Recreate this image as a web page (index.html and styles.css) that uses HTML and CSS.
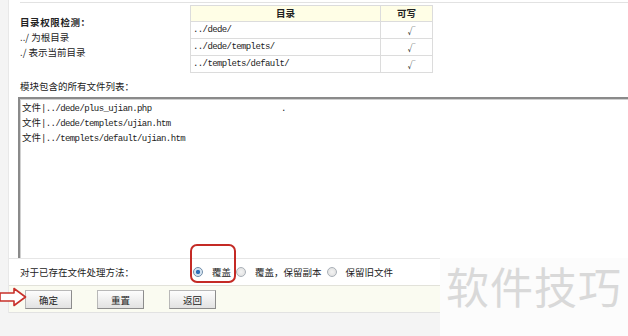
FILE: index.html
```html
<!DOCTYPE html>
<html lang="zh-CN">
<head>
    <meta charset="UTF-8">
    <title>模块安装</title>
    <link rel="stylesheet" href="styles.css">
</head>
<body>
    <div class="page">
        <div class="topline"></div>
        <div class="check">
            <div class="check-note">
                <div class="note-title">目录权限检测：</div>
                <div>../ 为根目录</div>
                <div>./ 表示当前目录</div>
            </div>
            <table class="dir-table">
                <tr>
                    <th class="col-dir">目录</th>
                    <th class="col-write">可写</th>
                </tr>
                <tr>
                    <td class="path">../dede/</td>
                    <td class="ok">√</td>
                </tr>
                <tr>
                    <td class="path">../dede/templets/</td>
                    <td class="ok">√</td>
                </tr>
                <tr>
                    <td class="path">../templets/default/</td>
                    <td class="ok">√</td>
                </tr>
            </table>
        </div>
        <div class="list-title">模块包含的所有文件列表：</div>
        <div class="file-list">
            <div class="file-line"><span class="cn">文件</span>|../dede/plus_ujian.php                           .</div>
            <div class="file-line"><span class="cn">文件</span>|../dede/templets/ujian.htm</div>
            <div class="file-line"><span class="cn">文件</span>|../templets/default/ujian.htm</div>
        </div>
        <div class="options">
            <div class="options-label">对于已存在文件处理方法：</div>
            <label class="opt"><input type="radio" name="mode" checked> 覆盖</label>
            <label class="opt"><input type="radio" name="mode"> 覆盖，保留副本</label>
            <label class="opt"><input type="radio" name="mode"> 保留旧文件</label>
        </div>
        <div class="actions">
            <button class="btn">确定</button>
            <button class="btn">重置</button>
            <button class="btn">返回</button>
        </div>
    </div>

    <div class="mark-box"></div>
    <svg class="mark-arrow" width="27" height="20" viewBox="0 0 27 20">
        <polygon points="0,6 14,6 14,1.5 25.5,10 14,18.5 14,14 0,14" fill="#fff" stroke="#c8302a" stroke-width="1.6" stroke-linejoin="round"/>
    </svg>
    <div class="watermark">软件技巧</div>
</body>
</html>
```

FILE: styles.css
```css
*{
    padding:0;
    margin:0;
    box-sizing:border-box;
}
body{
    background:#f4f4f4;
    font-family:"Noto Sans CJK SC", sans-serif;
    font-size:9.5px;
    color:#222;
    overflow:hidden;
}
.page{
    margin-left:8px;
    border-left:1px solid #e8e8e8;
    background:#fff;
    padding-top:2px;
    overflow:hidden;
}
.topline{
    margin-left:11px;
    border-top:1px solid #e2e2e2;
}
.check{
    display:flex;
    margin-top:2px;
    padding-left:11px;
}
.check-note{
    width:170px;
    padding-top:10px;
    line-height:15px;
}
.note-title{
    font-weight:bold;
    letter-spacing:0.6px;
}
.dir-table{
    border-collapse:collapse;
    width:243px;
}
.dir-table th,
.dir-table td{
    border:1px solid #dcdcdc;
    height:17px;
    line-height:15px;
}
.dir-table th{
    background:#fffee6;
    height:16px;
    font-weight:bold;
    text-align:center;
}
.col-dir{
    width:190px;
}
.path{
    padding-left:2px;
    font-family:"Liberation Mono", "Noto Sans CJK SC", monospace;
    font-size:9px;
    letter-spacing:-0.6px;
}
.ok{
    text-align:center;
    padding-left:10px;
    font-size:8px;
}
.list-title{
    padding-left:11px;
    margin-top:6px;
    line-height:15px;
}
.file-list{
    margin:3px -30px 0 9px;
    height:161px;
    border-top:2px solid #8a8a8a;
    border-left:2px solid #8a8a8a;
    box-shadow:inset 1px 1px 0 #d0d0d0;
    padding:3px 0 0 2px;
    font-family:"Liberation Mono", "Noto Sans CJK SC", monospace;
    font-size:9px;
    letter-spacing:-0.6px;
    line-height:15px;
}
.file-line{
    white-space:pre;
    height:15px;
}
.file-line .cn{
    font-family:"Noto Sans CJK SC", sans-serif;
    font-size:9.5px;
    letter-spacing:0;
    line-height:1;
}
.options{
    display:flex;
    align-items:center;
    height:27px;
    padding-left:11px;
    border-top:1px solid #e6e6e6;
}
.options-label{
    width:173px;
}
.opt{
    display:flex;
    align-items:center;
    margin-right:5px;
}
.opt input{
    appearance:none;
    -webkit-appearance:none;
    width:10px;
    height:10px;
    border-radius:50%;
    border:1px solid #a9b0b8;
    background:radial-gradient(circle, #f4f4f4 0, #dcdcdc 100%);
    margin-right:9px;
}
.opt input:checked{
    border-color:#6f8ca8;
    background:radial-gradient(circle, #2f6fb8 0, #2f6fb8 30%, #cfe0f0 45%, #f0f4f8 100%);
}
.actions{
    display:flex;
    gap:25px;
    height:28px;
    padding:4px 0 0 16px;
    background:#fafbf1;
    border-top:1px solid #e2e2da;
    border-bottom:1px solid #e2e2e2;
}
.btn{
    width:47px;
    height:19px;
    border:1px solid #b8b8b8;
    border-right-color:#8c8c8c;
    border-bottom-color:#8c8c8c;
    background:linear-gradient(#fdfdfd, #e2e2e2);
    font-family:"Noto Sans CJK SC", sans-serif;
    font-size:9.5px;
    color:#222;
}
.mark-box{
    position:absolute;
    left:190px;
    top:244px;
    width:46px;
    height:39px;
    border:2px solid #c42a25;
    border-radius:7px;
}
.mark-arrow{
    position:absolute;
    left:0;
    top:287px;
}
.watermark{
    position:absolute;
    left:440px;
    top:258px;
    width:188px;
    height:78px;
    background:#fcfcfc;
    color:#d9d9d9;
    font-size:43px;
    line-height:54px;
    padding-left:6px;
    letter-spacing:1px;
}
```
